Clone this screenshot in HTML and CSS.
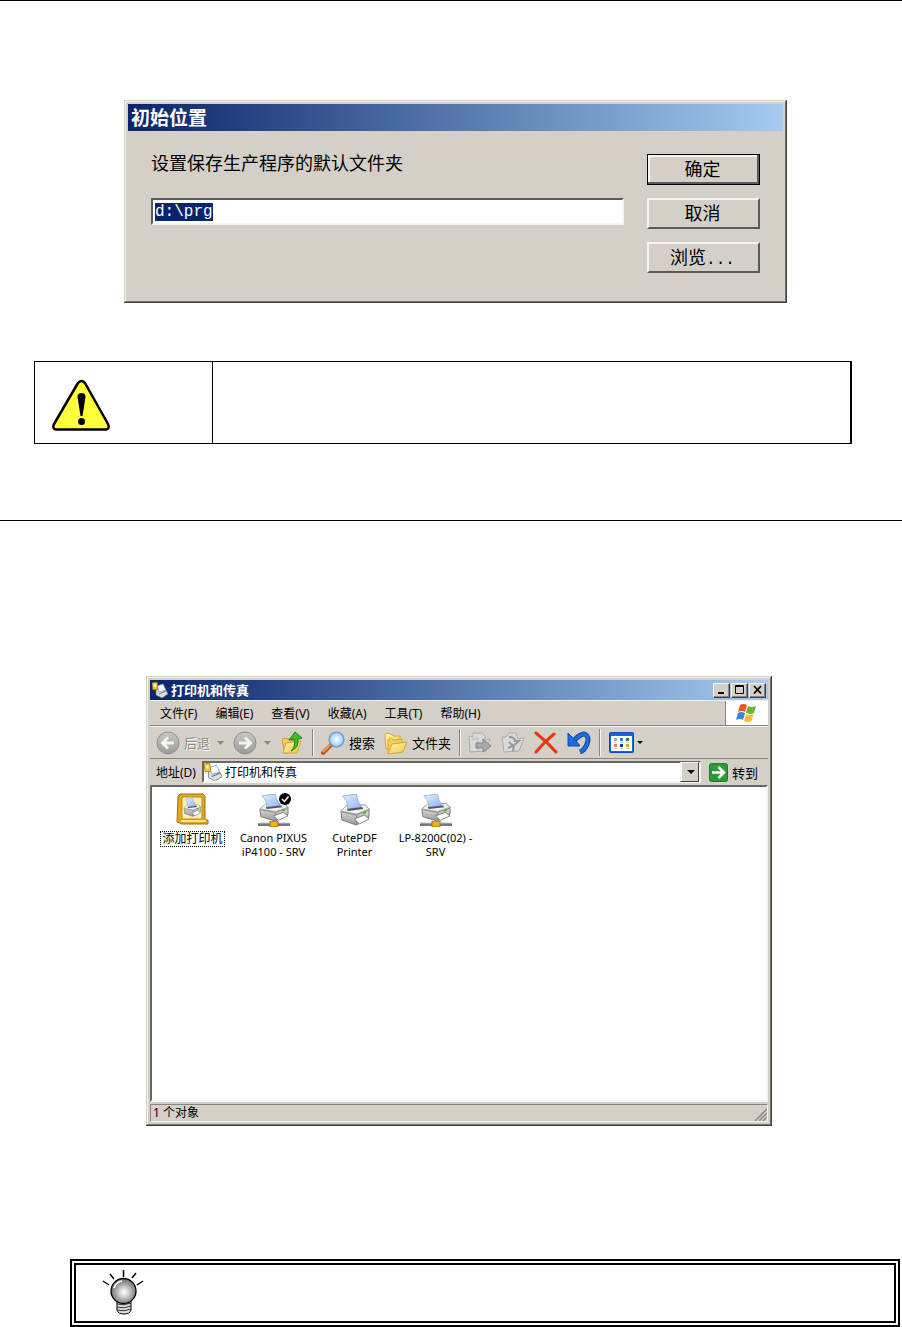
FILE: index.html
```html
<!DOCTYPE html>
<html lang="zh-CN">
  <head>
    <meta charset="UTF-8" />
    <meta name="viewport" content="width=device-width, initial-scale=1.0" />
    <title>初始位置</title>
    <link rel="stylesheet" href="styles.css">
  </head>
  <body>
    <!-- shared icon shapes -->
    <svg width="0" height="0" class="defs" aria-hidden="true">
      <defs>
        <linearGradient id="paper" x1="0" y1="0" x2="1" y2="1">
          <stop offset="0" stop-color="#e8f4ff" />
          <stop offset="1" stop-color="#86b4f4" />
        </linearGradient>
        <linearGradient id="gold" x1="0" y1="0" x2="1" y2="1">
          <stop offset="0" stop-color="#fff6b4" />
          <stop offset="1" stop-color="#f3c544" />
        </linearGradient>
        <linearGradient id="silver" x1="0" y1="0" x2="0" y2="1">
          <stop offset="0" stop-color="#f4f4f2" />
          <stop offset="1" stop-color="#989896" />
        </linearGradient>
        <linearGradient id="grayBall" x1="0" y1="0" x2="0" y2="1">
          <stop offset="0" stop-color="#c8c8c6" />
          <stop offset="1" stop-color="#9a9a98" />
        </linearGradient>
        <radialGradient id="glass">
          <stop offset="0" stop-color="#ffffff" />
          <stop offset="1" stop-color="#8fd0ff" />
        </radialGradient>
        <radialGradient id="bulb" cx="0.52" cy="0.55" r="0.55">
          <stop offset="0" stop-color="#ffffff" />
          <stop offset="0.35" stop-color="#d0d0d0" />
          <stop offset="1" stop-color="#666666" />
        </radialGradient>
        <symbol id="printer" viewBox="0 0 32 32" preserveAspectRatio="none">
          <path d="M2 17 L8 12 L27 11 L31 15 V23 L18 31 L3 26Z" fill="url(#silver)" stroke="#777" />
          <path d="M2 17 L8 11 L27 11 L31 15 L18 20Z" fill="#f1f1ef" stroke="#999" stroke-width="0.7" />
          <path d="M4 2 L18 0 Q18 6 23 13 L9 15 Q9 7 4 2Z" fill="url(#paper)" stroke="#8aa4d8" stroke-width="0.8" />
          <path d="M8 15 L24 13 L25 15 L9 17Z" fill="#555" />
          <path d="M3 18 L18 21 V30 M18 21 L31 16" fill="none" stroke="#888" />
          <path d="M16 25 L26 21 L31 25 L21 30Z" fill="#fff" stroke="#666" stroke-width="0.8" />
          <path d="M25 18 L28 17 V19 L25 20Z" fill="#3bb52e" />
        </symbol>
        <symbol id="cable" viewBox="0 0 32 6" preserveAspectRatio="none">
          <path d="M0 2H32V5H0Z" fill="#777" />
          <path d="M0 2H32" stroke="#b8c8d8" />
          <path d="M12 0H20V6H12Z" fill="#f0b020" stroke="#a87408" />
        </symbol>
        <symbol id="printers" viewBox="0 0 16 16">
          <path d="M4 8 L8 6 L14 8 L16 12 L10 16 L4 13Z" fill="#dededc" stroke="#777" stroke-width="0.7" />
          <path d="M5 4 L11 2 L14 8 L7 10Z" fill="#fff" stroke="#8098c8" stroke-width="0.7" />
          <path d="M7 12 L14 9" stroke="#777" />
          <path d="M0 1 L5 0 L6 7 L1 8Z" fill="#f5c63c" stroke="#a87a14" stroke-width="0.7" />
          <path d="M2 2 L4 2 L4 5 L2 5Z" fill="#fff3b0" />
        </symbol>
      </defs>
    </svg>

    <section class="section">
      <form class="dialog bevel" onsubmit="return false">
        <h2 class="dialog-title">初始位置</h2>
        <div class="dialog-body">
          <div class="field">
            <label for="folder">设置保存生产程序的默认文件夹</label>
            <input type="text" id="folder" value="d:\prg" spellcheck="false" autocomplete="off" />
          </div>
          <div class="dialog-buttons">
            <button type="submit" class="default">确定</button>
            <button type="button">取消</button>
            <button type="button">浏览<span class="dots">...</span></button>
          </div>
        </div>
      </form>

      <div class="notice">
        <div class="notice-icon">
          <svg width="58" height="52" viewBox="0 0 58 52" role="img" aria-label="注意">
            <path d="M26 4 Q29 0 33 4 L56 45 Q58 50 54 50.500 H4 Q0 50 2 45Z" fill="#ffff3c" stroke="#000" stroke-width="2.500" stroke-linejoin="round" />
            <path d="M25.500 18 Q25.500 14 29.500 14 Q33.500 14 33.500 18 L30.500 37 H28.500Z" />
            <circle cx="29.500" cy="42.500" r="3.500" />
          </svg>
        </div>
        <div class="notice-text"></div>
      </div>
    </section>

    <section class="section printers">
      <div class="window bevel">
        <div class="titlebar">
          <svg width="16" height="16"><use href="#printers" /></svg>
          <h2>打印机和传真</h2>
          <div class="caption-buttons">
            <button type="button" aria-label="最小化"><svg width="13" height="12"><path d="M3 9H9" stroke="#000" stroke-width="2" /></svg></button>
            <button type="button" aria-label="最大化"><svg width="13" height="12"><path d="M2.500 1.500H10.500V9.500H2.500Z M2 2.500H11" fill="none" stroke="#000" /></svg></button>
            <button type="button" aria-label="关闭"><svg width="13" height="12"><path d="M3 2 L10 9.500 M10 2 L3 9.500" stroke="#000" stroke-width="1.800" /></svg></button>
          </div>
        </div>

        <div class="menubar">
          <nav>
            <button type="button">文件(F)</button>
            <button type="button">编辑(E)</button>
            <button type="button">查看(V)</button>
            <button type="button">收藏(A)</button>
            <button type="button">工具(T)</button>
            <button type="button">帮助(H)</button>
          </nav>
          <div class="brand">
            <svg width="22" height="20" viewBox="0 0 22 20" aria-hidden="true">
              <path d="M4 2 Q7 0 11 2 L9 9 Q6 7 2 9Z" fill="#e8562a" />
              <path d="M12 3 Q16 5 20 3 L18 10 Q14 12 10 9.500Z" fill="#6cb52d" />
              <path d="M2 10 Q5 8 9 10 L7 17 Q4 15 0 17Z" fill="#3d83dc" />
              <path d="M10 11 Q14 13 17.500 11 L15.500 18 Q12 20 8 18Z" fill="#f7c02c" />
            </svg>
          </div>
        </div>

        <div class="toolbar">
          <button type="button" disabled>
            <svg width="24" height="24"><circle cx="12" cy="12" r="11" fill="url(#grayBall)" stroke="#8e8e8c" /><path d="M18 12H7 M12 6.500 L6.500 12 L12 17.500" fill="none" stroke="#f3f3f1" stroke-width="3" /></svg>
            <span>后退</span>
            <svg class="arrow" width="7" height="4"><path d="M0 0H7L3.500 4Z" fill="#888" /></svg>
          </button>
          <button type="button" disabled aria-label="前进">
            <svg width="24" height="24"><circle cx="12" cy="12" r="11" fill="url(#grayBall)" stroke="#8e8e8c" /><path d="M6 12H17 M12 6.500 L17.500 12 L12 17.500" fill="none" stroke="#f3f3f1" stroke-width="3" /></svg>
            <svg class="arrow" width="7" height="4"><path d="M0 0H7L3.500 4Z" fill="#888" /></svg>
          </button>
          <button type="button" aria-label="向上">
            <svg width="24" height="24">
              <path d="M2 9 L4 7 L9 8 L10 10 L16 9 V21 L5 22Z" fill="#f3cc50" stroke="#c99a2a" />
              <path d="M6 12 L21 10 L17 22 L3 22Z" fill="url(#gold)" stroke="#d2a63a" />
              <path d="M11 20 Q16 16 14 8 L9 9 L15 1 L22 7 L18 8 Q19 17 11 20Z" fill="#3fbd2c" stroke="#16841a" />
            </svg>
          </button>
          <span class="separator"></span>
          <button type="button">
            <svg width="24" height="24"><path d="M10 14 L2 22" stroke="#b45b20" stroke-width="4" stroke-linecap="round" /><path d="M9 14 L2 21" stroke="#f09a4c" stroke-width="2" /><circle cx="15.500" cy="8.500" r="7.300" fill="url(#glass)" stroke="#7d98d8" stroke-width="1.600" /></svg>
            <span>搜索</span>
          </button>
          <button type="button">
            <svg width="24" height="24">
              <path d="M1 4 L3 2 L7 3 L9 5 L16 5 V16 L2 18Z" fill="url(#gold)" stroke="#d6a832" />
              <path d="M4 9 L7 7 L10 9 L18 8 V21 L4 22Z" fill="#f5cf58" stroke="#d6a832" />
              <path d="M8 13 L23 11 L19 21 L4 23Z" fill="url(#gold)" stroke="#d6a832" />
            </svg>
            <span>文件夹</span>
          </button>
          <span class="separator"></span>
          <button type="button" disabled aria-label="移至">
            <svg width="24" height="24"><path d="M1 5 L5 6 V2 H14 L17 5 V9 L22 8 L18 20 L2 21Z" fill="#d9d9d6" stroke="#aaa" /><path d="M4 9 L10 7 V20" fill="none" stroke="#bbb" /><path d="M8 12H15V8L23 15L15 21V17H8Z" fill="#aaa" stroke="#858583" /></svg>
          </button>
          <button type="button" disabled aria-label="复制到">
            <svg width="24" height="24"><path d="M1 6 L5 6 L8 2 H15 L17 8 L23 7 L18 20 L3 21Z" fill="#d9d9d6" stroke="#aaa" /><path d="M8 6 Q14 6 14 10 L18 10 L12 15 L8 11 M7 17 L13 14 L12 20" fill="none" stroke="#999997" stroke-width="2" /></svg>
          </button>
          <button type="button" aria-label="删除">
            <svg width="24" height="24"><path d="M2 2 Q12 10 22 21 M20 3 Q10 11 2 21" fill="none" stroke="#e83510" stroke-width="3" stroke-linecap="round" /></svg>
          </button>
          <button type="button" aria-label="撤消">
            <svg width="24" height="24"><path d="M6 11 Q11 4 17 3 Q23 5 20 13 Q18 19 13 21" fill="none" stroke="#0b48ac" stroke-width="5" /><path d="M6 11 Q11 4 17 3 Q23 5 20 13 Q18 19 13 21" fill="none" stroke="#1d6cd8" stroke-width="3" /><path d="M1 2 L5 6 L10 11 L13 15 L1 15Z" fill="#1d6cd8" stroke="#0b48ac" /></svg>
          </button>
          <span class="separator"></span>
          <button type="button" class="views" aria-label="查看">
            <svg width="25" height="21">
              <rect x="0.500" y="0.500" width="24" height="20" rx="1" fill="#1464dc" stroke="#0c4cb4" />
              <path d="M2 4H23V19H2Z" fill="#fff" />
              <path d="M5 6H8V9H5Z" fill="#a9a4cf" /><path d="M11 6H14V9H11Z" fill="#2c86ec" /><path d="M17 6H20V9H17Z" fill="#0f9a16" />
              <path d="M5 12H8V15H5Z" fill="#ff7a4e" /><path d="M11 12H14V15H11Z" fill="#0b3ba6" /><path d="M17 12H20V15H17Z" fill="#d8a210" />
              <path d="M5 10.500H8M11 10.500H14M17 10.500H20M5 16.500H8M11 16.500H14M17 16.500H20" stroke="#ccc" />
            </svg>
            <svg class="arrow" width="6" height="3"><path d="M0 0H6L3 3Z" /></svg>
          </button>
        </div>

        <div class="addressbar">
          <label for="address">地址(D)</label>
          <div class="combo sunken">
            <svg width="18" height="18"><use href="#printers" /></svg>
            <select id="address">
              <option>打印机和传真</option>
            </select>
          </div>
          <button type="button" class="go">
            <svg width="19" height="19"><rect x="0.500" y="0.500" width="18" height="18" rx="2" fill="#2d9a36" stroke="#1d7a28" /><path d="M3 9.500H14 M9.500 4 L15 9.500 L9.500 15" fill="none" stroke="#fff" stroke-width="2.500" /></svg>
            <span>转到</span>
          </button>
        </div>

        <ul class="files sunken">
          <li>
            <a href="#">
              <svg width="34" height="34" viewBox="0 0 34 34">
                <path d="M2 3 L4 1 H27 L29 3 V27 H32 V31 H6 L1 29Z" fill="#e0a91e" stroke="#9e7210" />
                <path d="M6 4H26V26H6Z" fill="#fff0ae" stroke="#b98c20" />
                <path d="M5 28H30" stroke="#ffe58a" stroke-width="2" />
                <use href="#printer" x="7" y="5" width="18" height="19" />
              </svg>
              <span class="focused">添加打印机</span>
            </a>
          </li>
          <li>
            <a href="#">
              <svg width="34" height="34" viewBox="0 0 34 34">
                <use href="#printer" x="1" y="1" width="31" height="28" />
                <use href="#cable" x="1" y="28" width="32" height="6" />
                <circle cx="28" cy="6" r="6" />
                <path d="M25 6 L27.500 8.500 L31.500 3.500" fill="none" stroke="#fff" stroke-width="1.500" />
              </svg>
              <span>Canon PIXUS<br>iP4100 - SRV</span>
            </a>
          </li>
          <li>
            <a href="#">
              <svg width="34" height="34" viewBox="0 0 34 34"><use href="#printer" x="1" y="1" width="31" height="32" /></svg>
              <span>CutePDF<br>Printer</span>
            </a>
          </li>
          <li>
            <a href="#">
              <svg width="34" height="34" viewBox="0 0 34 34">
                <use href="#printer" x="1" y="1" width="31" height="28" />
                <use href="#cable" x="1" y="28" width="32" height="6" />
              </svg>
              <span>LP-8200C(02) -<br>SRV</span>
            </a>
          </li>
        </ul>

        <div class="statusbar">
          <span>1 个对象</span>
          <svg width="13" height="13"><path d="M1 13L13 1M5 13L13 5M9 13L13 9" stroke="#8a8782" stroke-width="1.500" /></svg>
        </div>
      </div>

      <div class="tip">
        <svg width="44" height="46" viewBox="0 0 44 46" role="img" aria-label="提示">
          <path d="M21.500 1V8 M8 5L12 10 M34 4L30 9 M1 12L7 16 M41 12L35 16" stroke="#000" stroke-width="1.500" />
          <path d="M15 30H29V41Q28 45 22 45Q16 45 15 41Z" fill="#ddd" stroke="#000" />
          <path d="M15 35Q22 37 29 34 M15 38Q22 40 29 37 M15 41Q22 43 29 40" fill="none" stroke="#333" />
          <circle cx="21.500" cy="22" r="12.500" fill="url(#bulb)" stroke="#000" stroke-width="1.300" />
          <path d="M12 19Q14 13 20 12" fill="none" stroke="#fff" stroke-width="1.500" />
        </svg>
      </div>
    </section>

    <script>
      // Folder path starts out selected
      const folder = document.getElementById("folder");
      folder.focus({ preventScroll: true });
      folder.select();
    </script>
  </body>
</html>
```

FILE: styles.css
```css
:root {
  --face: #d4d0c8;
  --light: #f6f4f0;
  --shadow: #88857f;
  --dark: #404040;
  --navy: #0a246a;
  --sky: #a6caf0;
}

* {
  box-sizing: border-box;
}

body {
  margin: 0;
  background: #fff;
  color: #000;
  font-family: "Noto Sans", "Noto Sans CJK SC", sans-serif;
  font-size: 12px;
}

.defs {
  position: absolute;
}

svg {
  display: block;
  flex: none;
}

h2 {
  margin: 0;
  color: #fff;
  font-weight: bold;
}

button,
input,
select {
  color: inherit;
  font: inherit;
}

button {
  padding: 0;
  border: 0;
  background: none;
}

.section {
  border-top: 1px solid #000;
  padding: 99px 0 76px;
}

.bevel {
  background: var(--face);
  padding: 4px;
  box-shadow: inset -1px -1px var(--dark), inset 1px 1px var(--face),
    inset -2px -2px #77746f, inset 2px 2px var(--light);
}

.sunken {
  background: #fff;
  border: 2px solid;
  border-color: #6a6864 var(--light) var(--light) #6a6864;
}

/* Folder dialog */
.dialog {
  margin: 0 115px 0 124px;
  font-family: "Noto Sans CJK SC", sans-serif;
  font-size: 18px;
}

.dialog-title {
  padding: 0 0 2px 3px;
  background: linear-gradient(to right, var(--navy), var(--sky));
  font-size: 19px;
  line-height: 25px;
}

.dialog-body {
  display: flex;
  gap: 23px;
  padding: 22px 23px 26px;
}

.field {
  flex: 1;
  display: flex;
  flex-direction: column;
  gap: 27px;
}

.field label {
  line-height: 18px;
}

.field input {
  width: 100%;
  height: 27px;
  padding: 0 2px;
  border: 2px solid;
  border-color: #5a5a58 var(--light) var(--light) #5a5a58;
  outline: none;
  background: #fff;
  font-family: "Liberation Mono", monospace;
  font-size: 16px;
}

.field input::selection {
  background: var(--navy);
  color: #fff;
}

.dialog-buttons {
  display: flex;
  flex-direction: column;
  gap: 13px;
  width: 113px;
  padding-top: 1px;
}

.dialog-buttons button {
  height: 31px;
  padding: 0 2px 2px 0;
  line-height: 25px;
  background: var(--face);
  border: 2px solid;
  border-color: var(--light) #5a5a58 #5a5a58 var(--light);
}

.dialog-buttons .default {
  border: 1px solid #000;
  box-shadow: inset -2px -2px #5a5a58, inset 2px 2px var(--light);
}

.dots {
  font-family: "Liberation Mono", monospace;
  font-size: 16px;
}

/* Warning box */
.notice {
  display: flex;
  height: 83px;
  margin: 58px 50px 0 34px;
  border: 1px solid #000;
  border-right-width: 2px;
}

.notice-icon {
  width: 178px;
  padding: 17px;
  border-right: 1px solid #000;
}

/* Printer window */
.printers {
  padding: 155px 0 0;
}

.window {
  margin: 0 130px 0 146px;
}

.titlebar {
  display: flex;
  align-items: center;
  gap: 3px;
  height: 20px;
  padding: 0 2px;
  background: linear-gradient(to right, var(--navy), var(--sky));
}

.titlebar h2 {
  flex: 1;
  font-family: "Noto Sans CJK SC", sans-serif;
  font-size: 13px;
  line-height: 18px;
}

.caption-buttons {
  display: flex;
  gap: 1px;
}

.caption-buttons button {
  width: 17px;
  height: 15px;
  padding-left: 1px;
  background: var(--face);
  border: 1px solid;
  border-color: var(--light) var(--dark) var(--dark) var(--light);
  box-shadow: inset -1px -1px var(--shadow);
}

.menubar {
  display: flex;
  justify-content: space-between;
  height: 26px;
  border-top: 1px solid var(--light);
  border-bottom: 1px solid var(--shadow);
}

.menubar nav {
  display: flex;
  gap: 18px;
  padding-left: 10px;
}

.brand {
  display: grid;
  place-items: center;
  width: 43px;
  background: #fff;
  border-left: 1px solid var(--shadow);
}

.toolbar {
  display: flex;
  align-items: center;
  gap: 9px;
  height: 33px;
  padding-left: 6px;
  border-top: 1px solid var(--light);
  border-bottom: 1px solid var(--shadow);
}

.toolbar button {
  display: flex;
  align-items: center;
  gap: 4px;
  font-size: 13px;
}

.toolbar button:disabled {
  color: #8c8984;
  text-shadow: 1px 1px #fff;
}

.toolbar .arrow {
  margin-left: 3px;
}

.toolbar .views {
  gap: 0;
  padding-left: 1px;
}

.separator {
  width: 2px;
  height: 27px;
  margin: 0 -2px 0 -1px;
  background: var(--shadow);
  border-right: 1px solid var(--light);
}

.addressbar {
  display: flex;
  align-items: center;
  gap: 6px;
  height: 26px;
  padding: 0 10px 0 6px;
}

.combo {
  position: relative;
  flex: 1;
  display: flex;
  align-items: center;
  height: 22px;
}

.combo select {
  flex: 1;
  height: 18px;
  padding: 0 20px 0 3px;
  border: 0;
  appearance: none;
  background: linear-gradient(var(--face), var(--face)) right / 17px 18px no-repeat;
}

.combo::after {
  content: "";
  position: absolute;
  right: 4px;
  top: 7px;
  border: 4px solid transparent;
  border-top-color: #000;
  border-bottom: 0;
  pointer-events: none;
}

.combo::before {
  content: "";
  position: absolute;
  right: 0;
  width: 17px;
  height: 18px;
  border: 1px solid;
  border-color: var(--light) var(--dark) var(--dark) var(--light);
  pointer-events: none;
}

.go {
  display: flex;
  align-items: center;
  gap: 4px;
  padding-left: 2px;
  font-size: 13px;
}

.files {
  display: flex;
  height: 317px;
  margin: 0;
  padding: 6px 0;
  list-style: none;
}

.files li {
  width: 81px;
}

.files a {
  display: flex;
  flex-direction: column;
  align-items: center;
  gap: 4px;
  color: inherit;
  font-size: 11px;
  line-height: 14px;
  text-align: center;
  text-decoration: none;
  white-space: nowrap;
}

.files .focused {
  padding: 0 1px;
  border: 1px dotted #000;
  font-size: 12px;
}

.statusbar {
  display: flex;
  justify-content: space-between;
  align-items: flex-end;
  height: 18px;
  margin-top: 2px;
  padding-left: 2px;
  border: 1px solid;
  border-color: var(--shadow) var(--light) var(--light) var(--shadow);
  line-height: 16px;
}

/* Tip box */
.tip {
  height: 68px;
  margin: 133px 2px 0 70px;
  padding: 4px 26px;
  border: 6px double #000;
}
```
